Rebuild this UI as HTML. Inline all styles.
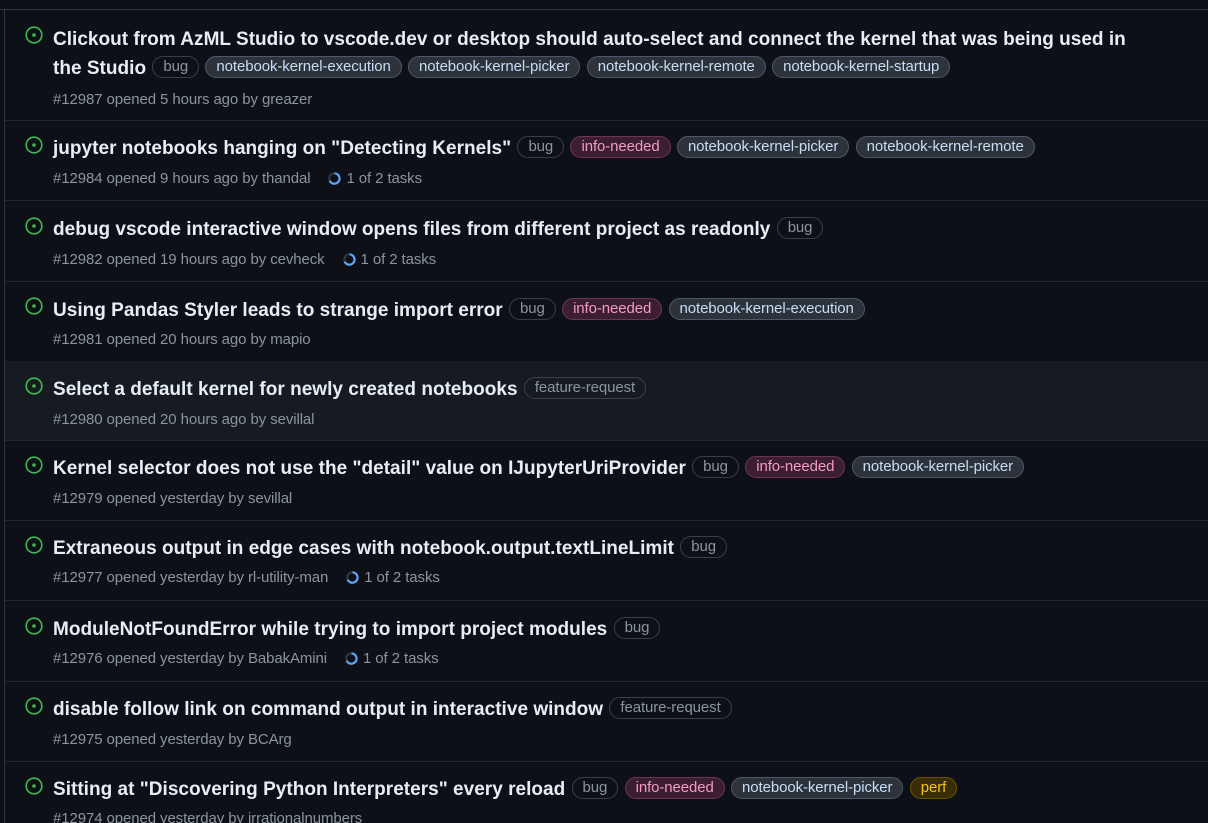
<!DOCTYPE html>
<html><head><meta charset="utf-8"><style>
html,body{margin:0;height:823px;overflow:hidden}
body{background:#0d1117;width:1208px;font-family:"Liberation Sans",sans-serif;position:relative}
.top{position:absolute;left:0;top:0;width:1208px;height:9px;border-bottom:1px solid #30363d;background:#0d1117}
.lb{position:absolute;left:4px;top:10px;bottom:0;border-left:1px solid #30363d}
.row{position:absolute;left:5px;right:0;border-bottom:1px solid #21262d}
.row.hl{background:#161b22}
.ic{position:absolute;left:20px;width:18px;height:18px}
.t{position:absolute;left:48px;width:1085px;color:#e6edf3;font-size:19px;font-weight:bold;line-height:29px;letter-spacing:0.02px;margin-top:1px}
.m{position:absolute;left:48px;color:#8b949e;font-size:15px;letter-spacing:-0.1px}
.l{display:inline-block;font-size:15px;font-weight:normal;line-height:18px;padding:1px 10px 1px;height:18px;box-sizing:content-box;border-radius:12px;border:1px solid;vertical-align:3px;letter-spacing:-0.1px;margin-left:1px}
.bug{color:#8b949e;border-color:#3a3f46;background:transparent}
.info{color:#f49ac7;border-color:#6e3552;background:#3b1f30}
.nk{color:#c9dcf5;border-color:#4f5864;background:#2d333b}
.fr{color:#8b949e;border-color:#3a3f46}
.perf{color:#f0c414;border-color:#6b5300;background:#3a2d05}
.sp{display:inline-block;width:13px;height:13px;vertical-align:-2px;margin:0 5px 0 18px}
</style></head><body>
<div class="top"></div><div class="lb"></div>
<svg width="0" height="0" style="position:absolute"><defs>
<symbol id="o" viewBox="0 0 18 18"><circle cx="9" cy="9" r="7.8" fill="none" stroke="#3fb950" stroke-width="1.6"/><circle cx="9" cy="9" r="1.8" fill="#3fb950"/></symbol>
<symbol id="p" viewBox="0 0 12 12"><circle cx="6" cy="6" r="4.8" fill="none" stroke="#30363d" stroke-width="2"/><path d="M6 1.2 A4.8 4.8 0 1 1 1.5 8" fill="none" stroke="#58a6ff" stroke-width="2"/></symbol>
</defs></svg>

<div class="row" style="top:10px;height:110px">
<svg class="ic" style="top:16px"><use href="#o"/></svg>
<div class="t" style="top:14px">Clickout from AzML Studio to vscode.dev or desktop should auto-select and connect the kernel that was being used in the Studio <span class="l bug">bug</span> <span class="l nk">notebook-kernel-execution</span> <span class="l nk">notebook-kernel-picker</span> <span class="l nk">notebook-kernel-remote</span> <span class="l nk">notebook-kernel-startup</span></div>
<div class="m" style="top:81px">#12987 opened 5 hours ago by greazer</div>
</div>

<div class="row" style="top:120px;height:80px">
<svg class="ic" style="top:16px"><use href="#o"/></svg>
<div class="t" style="top:13px">jupyter notebooks hanging on "Detecting Kernels" <span class="l bug">bug</span> <span class="l info">info-needed</span> <span class="l nk">notebook-kernel-picker</span> <span class="l nk">notebook-kernel-remote</span></div>
<div class="m" style="top:50px">#12984 opened 9 hours ago by thandal<svg class="sp"><use href="#p"/></svg>1 of 2 tasks</div>
</div>

<div class="row" style="top:200px;height:81px">
<svg class="ic" style="top:17px"><use href="#o"/></svg>
<div class="t" style="top:14px">debug vscode interactive window opens files from different project as readonly <span class="l bug">bug</span></div>
<div class="m" style="top:51px">#12982 opened 19 hours ago by cevheck<svg class="sp"><use href="#p"/></svg>1 of 2 tasks</div>
</div>

<div class="row" style="top:281px;height:80px">
<svg class="ic" style="top:16px"><use href="#o"/></svg>
<div class="t" style="top:14px">Using Pandas Styler leads to strange import error <span class="l bug">bug</span> <span class="l info">info-needed</span> <span class="l nk">notebook-kernel-execution</span></div>
<div class="m" style="top:50px">#12981 opened 20 hours ago by mapio</div>
</div>

<div class="row hl" style="top:361px;height:79px">
<svg class="ic" style="top:16px"><use href="#o"/></svg>
<div class="t" style="top:13px">Select a default kernel for newly created notebooks <span class="l fr">feature-request</span></div>
<div class="m" style="top:50px">#12980 opened 20 hours ago by sevillal</div>
</div>

<div class="row" style="top:440px;height:80px">
<svg class="ic" style="top:16px"><use href="#o"/></svg>
<div class="t" style="top:13px">Kernel selector does not use the "detail" value on IJupyterUriProvider <span class="l bug">bug</span> <span class="l info">info-needed</span> <span class="l nk">notebook-kernel-picker</span></div>
<div class="m" style="top:50px">#12979 opened yesterday by sevillal</div>
</div>

<div class="row" style="top:520px;height:80px">
<svg class="ic" style="top:16px"><use href="#o"/></svg>
<div class="t" style="top:13px">Extraneous output in edge cases with notebook.output.textLineLimit <span class="l bug">bug</span></div>
<div class="m" style="top:49px">#12977 opened yesterday by rl-utility-man<svg class="sp"><use href="#p"/></svg>1 of 2 tasks</div>
</div>

<div class="row" style="top:600px;height:81px">
<svg class="ic" style="top:17px"><use href="#o"/></svg>
<div class="t" style="top:14px">ModuleNotFoundError while trying to import project modules <span class="l bug">bug</span></div>
<div class="m" style="top:50px">#12976 opened yesterday by BabakAmini<svg class="sp"><use href="#p"/></svg>1 of 2 tasks</div>
</div>

<div class="row" style="top:681px;height:80px">
<svg class="ic" style="top:16px"><use href="#o"/></svg>
<div class="t" style="top:13px">disable follow link on command output in interactive window <span class="l fr">feature-request</span></div>
<div class="m" style="top:50px">#12975 opened yesterday by BCArg</div>
</div>

<div class="row" style="top:761px;height:62px;border:none">
<svg class="ic" style="top:16px"><use href="#o"/></svg>
<div class="t" style="top:13px">Sitting at "Discovering Python Interpreters" every reload <span class="l bug">bug</span> <span class="l info">info-needed</span> <span class="l nk">notebook-kernel-picker</span> <span class="l perf">perf</span></div>
<div class="m" style="top:49px">#12974 opened yesterday by irrationalnumbers</div>
</div>
</body></html>
